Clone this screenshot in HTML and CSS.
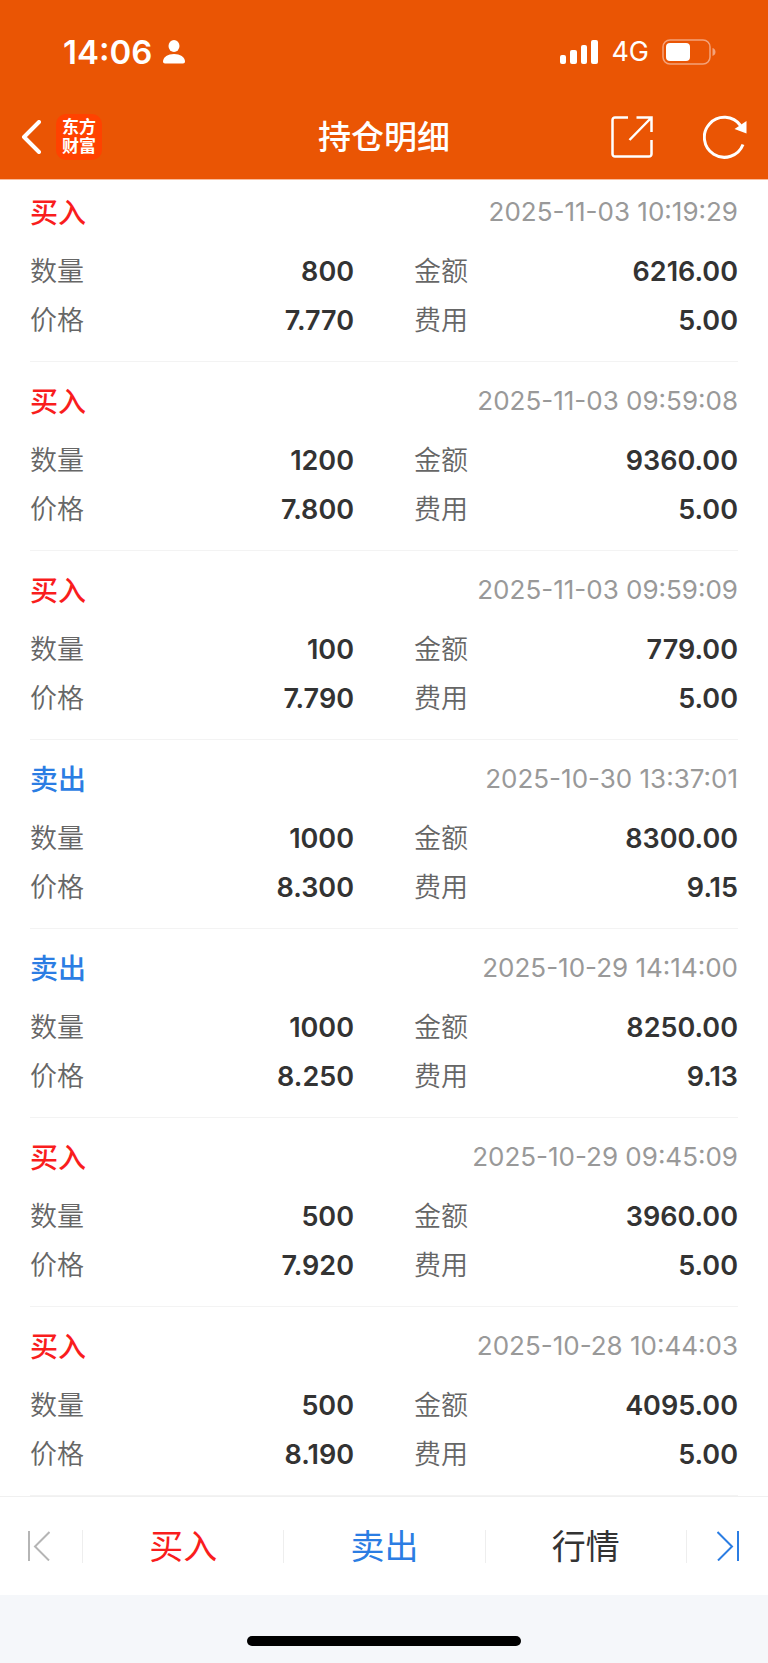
FILE: index.html
```html
<!DOCTYPE html>
<html lang="zh-CN">
<head>
  <meta charset="UTF-8" />
  <meta name="viewport" content="width=device-width, initial-scale=1.0" />
  <title>持仓明细</title>
  <link rel="stylesheet" href="styles.css">
</head>
<body>
  <header class="header">
    <div class="status-bar">
      <div class="status-left">
        <span class="time">14:06</span>
        <svg width="22" height="24" viewBox="0 0 22 24" fill="#fff" aria-hidden="true">
          <ellipse cx="11" cy="6" rx="5.5" ry="6" />
          <path d="M0 21.5C0 17 5 14 11 14s11 3 11 7.500c0 1.200-.8 2-2 2H2c-1.200 0-2-.8-2-2z" />
        </svg>
      </div>
      <div class="status-right">
        <svg width="38" height="24" viewBox="0 0 38 24" fill="#fff" aria-hidden="true">
          <rect x="0" y="15" width="6" height="9" rx="2" />
          <rect x="10" y="10" width="7" height="14" rx="2" />
          <rect x="21" y="5" width="6" height="19" rx="2" />
          <rect x="31" y="0" width="7" height="24" rx="2" />
        </svg>
        <span class="network">4G</span>
        <svg width="54" height="26" viewBox="0 0 54 26" aria-hidden="true">
          <rect x="1" y="1" width="47" height="24" rx="7" fill="none" stroke="#f4a27a" stroke-width="1.500" />
          <rect x="4" y="4" width="24" height="18" rx="4" fill="#fff" />
          <path d="M50.500 9c2 .6 3 2.200 3 4s-1 3.400-3 4z" fill="#f4a27a" />
        </svg>
      </div>
    </div>
    <div class="nav-bar">
      <div class="nav-left">
        <button type="button" class="icon-btn" aria-label="返回">
          <svg width="20" height="34" viewBox="0 0 20 34" fill="none" stroke="#fff" stroke-width="4" stroke-linecap="round" stroke-linejoin="round">
            <path d="M18 2L3 17l15 15" />
          </svg>
        </button>
        <a href="#" class="logo">东方<br>财富</a>
      </div>
      <h1>持仓明细</h1>
      <div class="nav-right">
        <button type="button" class="icon-btn" aria-label="分享">
          <svg width="42" height="42" viewBox="0 0 42 42" fill="none" stroke="#fff" stroke-width="2.500">
            <path d="M17 1.500H4a2.500 2.500 0 0 0-2.500 2.500v34a2.500 2.500 0 0 0 2.500 2.500h34a2.500 2.500 0 0 0 2.500-2.500V24" />
            <path d="M25.500 1.500h15V16M40 2L18.500 24" />
          </svg>
        </button>
        <button type="button" class="icon-btn" aria-label="刷新">
          <svg width="44" height="44" viewBox="0 0 44 44" fill="none">
            <path d="M40 29.500A20 20 0 1 1 37.500 10.500" stroke="#fff" stroke-width="3" />
            <path d="M43.500 6v12.500L31.500 14z" fill="#fff" />
          </svg>
        </button>
      </div>
    </div>
  </header>

  <main class="records">
    <section class="record">
      <div class="record-head"><h2 class="buy">买入</h2><time>2025-11-03 10:19:29</time></div>
      <dl>
        <div><dt>数量</dt><dd>800</dd></div>
        <div><dt>金额</dt><dd>6216.00</dd></div>
        <div><dt>价格</dt><dd>7.770</dd></div>
        <div><dt>费用</dt><dd>5.00</dd></div>
      </dl>
    </section>
    <section class="record">
      <div class="record-head"><h2 class="buy">买入</h2><time>2025-11-03 09:59:08</time></div>
      <dl>
        <div><dt>数量</dt><dd>1200</dd></div>
        <div><dt>金额</dt><dd>9360.00</dd></div>
        <div><dt>价格</dt><dd>7.800</dd></div>
        <div><dt>费用</dt><dd>5.00</dd></div>
      </dl>
    </section>
    <section class="record">
      <div class="record-head"><h2 class="buy">买入</h2><time>2025-11-03 09:59:09</time></div>
      <dl>
        <div><dt>数量</dt><dd>100</dd></div>
        <div><dt>金额</dt><dd>779.00</dd></div>
        <div><dt>价格</dt><dd>7.790</dd></div>
        <div><dt>费用</dt><dd>5.00</dd></div>
      </dl>
    </section>
    <section class="record">
      <div class="record-head"><h2 class="sell">卖出</h2><time>2025-10-30 13:37:01</time></div>
      <dl>
        <div><dt>数量</dt><dd>1000</dd></div>
        <div><dt>金额</dt><dd>8300.00</dd></div>
        <div><dt>价格</dt><dd>8.300</dd></div>
        <div><dt>费用</dt><dd>9.15</dd></div>
      </dl>
    </section>
    <section class="record">
      <div class="record-head"><h2 class="sell">卖出</h2><time>2025-10-29 14:14:00</time></div>
      <dl>
        <div><dt>数量</dt><dd>1000</dd></div>
        <div><dt>金额</dt><dd>8250.00</dd></div>
        <div><dt>价格</dt><dd>8.250</dd></div>
        <div><dt>费用</dt><dd>9.13</dd></div>
      </dl>
    </section>
    <section class="record">
      <div class="record-head"><h2 class="buy">买入</h2><time>2025-10-29 09:45:09</time></div>
      <dl>
        <div><dt>数量</dt><dd>500</dd></div>
        <div><dt>金额</dt><dd>3960.00</dd></div>
        <div><dt>价格</dt><dd>7.920</dd></div>
        <div><dt>费用</dt><dd>5.00</dd></div>
      </dl>
    </section>
    <section class="record">
      <div class="record-head"><h2 class="buy">买入</h2><time>2025-10-28 10:44:03</time></div>
      <dl>
        <div><dt>数量</dt><dd>500</dd></div>
        <div><dt>金额</dt><dd>4095.00</dd></div>
        <div><dt>价格</dt><dd>8.190</dd></div>
        <div><dt>费用</dt><dd>5.00</dd></div>
      </dl>
    </section>
  </main>

  <footer>
    <div class="toolbar">
      <button type="button" class="step" aria-label="上一个" disabled>
        <svg width="22" height="30" viewBox="0 0 22 30" fill="none" stroke="#b5b5b5" stroke-width="2">
          <path d="M1 0v30M21.500 1L7 15.500 21 29.500" />
        </svg>
      </button>
      <button type="button" class="action buy">买入</button>
      <button type="button" class="action sell">卖出</button>
      <button type="button" class="action">行情</button>
      <button type="button" class="step" aria-label="下一个">
        <svg width="22" height="30" viewBox="0 0 22 30" fill="none" stroke="#2b7de3" stroke-width="2">
          <path d="M21 0v30M.5 1L15 15.500 1 29.500" />
        </svg>
      </button>
    </div>
    <div class="home-area"><div class="home-bar"></div></div>
  </footer>
</body>
</html>
```
FILE: styles.css
```css
* {
  box-sizing: border-box;
}

body {
  margin: 0;
  font-family: Inter, "Noto Sans CJK SC", sans-serif;
  color: #333;
  background-color: #fff;
}

h1, h2, dl, dd {
  margin: 0;
}

button {
  padding: 0;
  border: none;
  background: none;
  font-family: inherit;
  color: inherit;
}

svg {
  display: block;
}

.header {
  background-color: #ea5504;
  border-bottom: 1px solid #f9bb9b;
  color: #fff;
}

.status-bar {
  display: flex;
  align-items: center;
  justify-content: space-between;
  height: 103px;
  padding: 0 52px 0 63px;
}

.status-left, .status-right, .nav-left, .nav-right {
  display: flex;
  align-items: center;
}

.status-left {
  gap: 11px;
}

.status-right {
  gap: 13px;
}

.time {
  font-size: 33px;
  font-weight: 600;
}

.network {
  font-size: 27px;
  font-weight: 400;
}

.nav-bar {
  display: grid;
  grid-template-columns: 1fr auto 1fr;
  align-items: center;
  height: 76px;
  padding: 0 21px 8px 21px;
}

.nav-left {
  gap: 15px;
}

.nav-right {
  gap: 50px;
  justify-content: flex-end;
}

.nav-bar h1 {
  font-size: 33px;
  font-weight: 500;
  line-height: 40px;
}

.logo {
  display: flex;
  align-items: center;
  justify-content: center;
  width: 46px;
  height: 46px;
  border-radius: 10px;
  background-color: #ff4200;
  color: #fff;
  font-size: 17px;
  font-weight: 700;
  line-height: 19px;
  text-decoration: none;
}

.records {
  padding: 0 30px;
}

.record {
  padding: 20px 0 16px;
  border-bottom: 1px solid #f3f3f3;
}

.record:first-child {
  padding-top: 13px;
}

.record-head {
  display: flex;
  justify-content: space-between;
  height: 40px;
  margin-bottom: 14px;
}

.record-head h2 {
  font-size: 28px;
  font-weight: 500;
  line-height: 40px;
}

.record-head time {
  font-size: 26px;
  line-height: 38px;
  color: #999;
}

.record dl {
  display: grid;
  grid-template-columns: 1fr 1fr;
  column-gap: 60px;
}

.record dl div {
  display: flex;
  align-items: baseline;
  justify-content: space-between;
  font-size: 27px;
  line-height: 49px;
}

.record dt {
  color: #666;
  font-weight: 350;
}

.record dd {
  font-weight: 600;
}

.buy {
  color: #f91d1d;
}

.sell {
  color: #2b7de3;
}

.toolbar {
  display: flex;
  align-items: center;
  height: 99px;
  border-top: 1px solid #f0f0f0;
}

.toolbar button {
  display: flex;
  align-items: center;
  justify-content: center;
  height: 33px;
}

.toolbar button + button {
  border-left: 1px solid #eee;
}

.step {
  flex: 0 0 82px;
}

.step:first-child {
  padding-right: 5px;
}

.step:last-child {
  padding-left: 2px;
}

.action {
  flex: 1;
  font-size: 34px;
  line-height: 33px;
}

.home-area {
  display: flex;
  align-items: flex-end;
  justify-content: center;
  height: 68px;
  padding-bottom: 17px;
  background-color: #f5f7fa;
}

.home-bar {
  width: 274px;
  height: 10px;
  border-radius: 5px;
  background-color: #000;
}
```
